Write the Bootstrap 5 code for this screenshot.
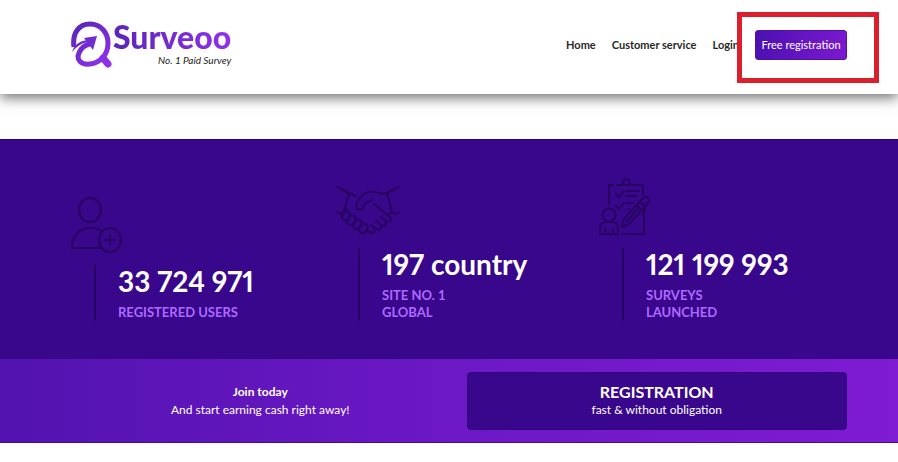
<!DOCTYPE html>
<html lang="en">
<head>
<meta charset="utf-8">
<meta name="viewport" content="width=device-width, initial-scale=1">
<title>Surveoo</title>
<link href="https://cdn.jsdelivr.net/npm/bootstrap@5.3.0/dist/css/bootstrap.min.css" rel="stylesheet">
<style>
  body { font-family: Lato, "Open Sans", sans-serif; font-size: 12px; line-height: 18px; color: #222; }
  .page-inner { padding-left: 71px; padding-right: 51px; }
  .site-header { min-height: 94px; padding-bottom: 4px; box-shadow: 0 4px 12px rgba(0,0,0,.55); }
  .brand-name { font-size: 32px; line-height: 34px; font-weight: 900; color: transparent;
    background: linear-gradient(90deg, #5a26b8, #9130ea); -webkit-background-clip: text; background-clip: text; }
  .brand-tag { font-size: 10px; line-height: 12px; font-style: italic; color: #222; }
  .site-nav { gap: 16px; }
  .site-nav .nav-link { padding: 0; font-size: 11px; font-weight: 700; color: #292929; white-space: nowrap; }
  .btn-register { height: 30px; padding: 0 5px; border: 1px solid #5210a8; border-radius: 3px; color: #fff; font-size: 11px;
    line-height: 28px; white-space: nowrap; min-width: 92px; background: linear-gradient(100deg, #4b10b0, #7c19d0); }
  .btn-register:hover { color: #fff; }
  .highlight-frame { position: absolute; inset: -18px -32px -23px -18px; border: 5px solid #dc1f2c; pointer-events: none; }
  .stats { margin-top: 45px; background: #39078b; padding-top: 38px; padding-bottom: 38px; border-top: 1px solid #2b0670; padding-right: 35px; }
  .stat-col { flex: 1 1 0; min-width: 0; }
  .stat-icon { display: block; fill: none; stroke: #27045f; stroke-width: 2; stroke-linecap: round; stroke-linejoin: round; }
  .stat-body { margin: 12px 0 0 23px; padding-left: 22px; border-left: 2px solid #25045e; }
  .stat-value { font-size: 28px; line-height: 32px; font-weight: 900; color: #fff; white-space: nowrap; font-variant-numeric: proportional-nums; }
  .stat-value { font-weight: 700; }
  .stat-label { font-size: 13px; line-height: 17px; font-weight: 700; color: #ad69ff; padding-top: 7px; }
  .stat-label-narrow { max-width: 90px; }
  .cta { background: linear-gradient(90deg, #5213b0, #6c18c5 50%, #7e1bd3); padding-top: 13px; padding-bottom: 12px; border-bottom: 1px solid #45107f; }
  .cta-row { gap: 17px; color: #fff; }
  .cta-box { flex: 1 1 0; min-height: 58px; font-size: 12px; line-height: 18px; }
  .cta-button { background: #39078b; border: 1px solid #32067c; border-radius: 4px; color: #fff; }
  .cta-title { font-size: 16px; line-height: 18px; font-weight: 700; }
</style>
</head>
<body class="bg-white">
<header class="site-header page-inner bg-white d-flex align-items-center justify-content-between">
  <a href="#" class="d-flex text-decoration-none" aria-label="Surveoo">
    <svg width="42" height="50" viewBox="0 0 42 50" fill="none" aria-hidden="true">
      <defs><linearGradient id="lg" gradientUnits="userSpaceOnUse" x1="0" y1="0" x2="40" y2="48"><stop stop-color="#5424b4"/><stop offset="1" stop-color="#9632f0"/></linearGradient></defs>
      <path d="M3 27C1 13 8 4 19 4c11 0 18 9 18 19 0 12-8 20-18 21C10 45 5 40 8 33c2-5 6-8 11-9" stroke="url(#lg)" stroke-width="5"/>
      <path d="M32 38l5 6" stroke="url(#lg)" stroke-width="7" stroke-linecap="round"/>
      <path d="M13 18l13-2-4 14-3-4-3-4zM1 32c2-7 8-12 17-12l1 2C12 22 6 26 1 32z" fill="url(#lg)"/>
    </svg>
    <span class="d-flex flex-column align-items-end">
      <span class="brand-name">Surveoo</span>
      <span class="brand-tag">No. 1 Paid Survey</span>
    </span>
  </a>
  <nav class="site-nav nav flex-nowrap align-items-center">
    <a class="nav-link" href="#">Home</a>
    <a class="nav-link" href="#">Customer service</a>
    <a class="nav-link" href="#">Login</a>
    <span class="position-relative">
      <a class="btn btn-register d-block" href="#">Free registration</a>
      <span class="highlight-frame"></span>
    </span>
  </nav>
</header>
<main>
  <section class="stats page-inner d-flex align-items-end">
    <div class="stat-col">
      <svg class="stat-icon" width="52" height="56" viewBox="0 0 52 56" aria-hidden="true">
        <ellipse cx="19" cy="13" rx="11" ry="12"/><path d="M29 51H1c0-12 7-20 18-20 5 0 9 1 12 3"/><ellipse cx="39" cy="43" rx="11" ry="12"/><path d="M39 38v10M34 43h10"/>
      </svg>
      <div class="stat-body">
        <div class="stat-value">33 724 971</div>
        <div class="stat-label">REGISTERED USERS</div>
      </div>
    </div>
    <div class="stat-col">
      <svg class="stat-icon" width="66" height="52" viewBox="0 0 66 52" aria-hidden="true">
        <path d="M2 3l12 6-5 19c-2 2-5 2-7 0M13 9l8 3M64 3L52 9l5 19c2 2 5 2 7 0M52 9l-4 1c-6-2-10-3-15-2-3 1-7 4-9 7-3 3-3 7-2 10 5 2 6-1 7-4 2-3 5-3 8-5M39 20l15 12c4 3 1 7-3 5l-5-4M50 37c2 4-1 6-4 4l-5-4M46 41c1 5-3 6-6 3l-4-3M40 44c0 5-4 6-7 3"/>
        <rect x="8" y="27" width="7" height="9" rx="3.5" transform="rotate(38 11 31)"/><rect x="13" y="31" width="7" height="10" rx="3.5" transform="rotate(38 16 36)"/><rect x="19" y="35" width="7" height="10" rx="3.5" transform="rotate(38 22 40)"/><rect x="25" y="39" width="7" height="10" rx="3.5" transform="rotate(38 28 44)"/>
        <path d="M55 30l2-3M9 27l3-2"/>
      </svg>
      <div class="stat-body">
        <div class="stat-value">197 country</div>
        <div class="stat-label stat-label-narrow">SITE NO. 1 GLOBAL</div>
      </div>
    </div>
    <div class="stat-col">
      <svg class="stat-icon" width="52" height="58" viewBox="0 0 52 58" aria-hidden="true">
        <path d="M10 26V7h4M18 7h6M32 7h12v9M45 40v16H23M20 7h16M24 7c0-8 7-8 7 0M17 16l3 3 5-6M17 28l3 3 5-6M28 13h12M28 18h9M28 25h6M29 31h1"/>
        <circle cx="10" cy="37" r="6.5"/><path d="M1 56v-6c0-4 3-6 6-6h6c4 0 6 2 6 6v6zM6 56v-5M14 56v-5M23 49l2-8 19-21c3-3 8 1 5 5L30 46zM40 23l6 5M37 27l6 5M28 43l11-12M47 28l-3 9 2 2"/>
      </svg>
      <div class="stat-body">
        <div class="stat-value">121 199 993</div>
        <div class="stat-label stat-label-narrow">SURVEYS LAUNCHED</div>
      </div>
    </div>
  </section>
  <section class="cta page-inner">
    <div class="cta-row d-flex">
      <div class="cta-box d-flex flex-column align-items-center justify-content-center">
        <strong>Join today</strong>
        <span>And start earning cash right away!</span>
      </div>
      <button type="button" class="cta-box cta-button d-flex flex-column align-items-center justify-content-center p-0">
        <span class="cta-title">REGISTRATION</span>
        <span>fast &amp; without obligation</span>
      </button>
    </div>
  </section>
</main>
</body>
</html>
